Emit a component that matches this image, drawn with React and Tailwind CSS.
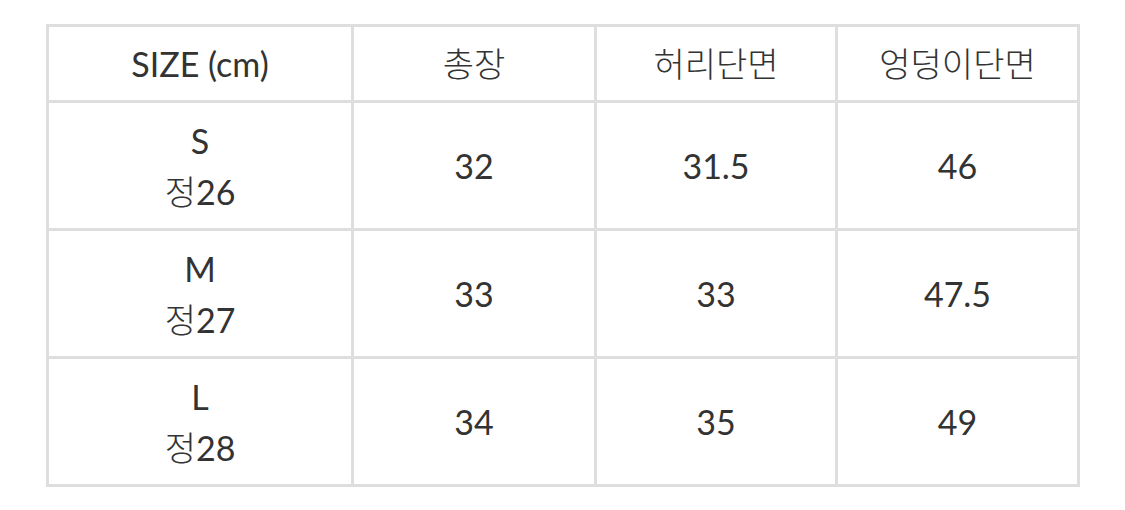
const rows = [
  { size: 'S', num: '26', total: '32', waist: '31.5', hip: '46' },
  { size: 'M', num: '27', total: '33', waist: '33', hip: '47.5' },
  { size: 'L', num: '28', total: '34', waist: '35', hip: '49' },
];

const cell = 'border-[3px] border-[#dedede]';

export default function App() {
  return (
    <div className="w-[1125px] h-[510px] bg-white pt-[24px] pl-[46px] font-['Lato','Noto_Sans_CJK_KR',sans-serif] text-[#333]">
      <table className="w-[1031px] table-fixed border-collapse text-center text-[34px] leading-[51px]">
        <colgroup>
          <col className="w-[305px]" />
          <col className="w-[243px]" />
          <col className="w-[241px]" />
          <col className="w-[242px]" />
        </colgroup>
        <thead>
          <tr className="h-[76px]">
            <th className={`${cell} font-normal`}>SIZE (cm)</th>
            <th className={`${cell} font-light`}>총장</th>
            <th className={`${cell} font-light`}>허리단면</th>
            <th className={`${cell} font-light`}>엉덩이단면</th>
          </tr>
        </thead>
        <tbody>
          {rows.map((r) => (
            <tr key={r.size} className="h-[128px]">
              <td className={cell}>
                <div>{r.size}</div>
                <div>
                  <span className="font-light">정</span>
                  {r.num}
                </div>
              </td>
              <td className={cell}>{r.total}</td>
              <td className={cell}>{r.waist}</td>
              <td className={cell}>{r.hip}</td>
            </tr>
          ))}
        </tbody>
      </table>
    </div>
  );
}
